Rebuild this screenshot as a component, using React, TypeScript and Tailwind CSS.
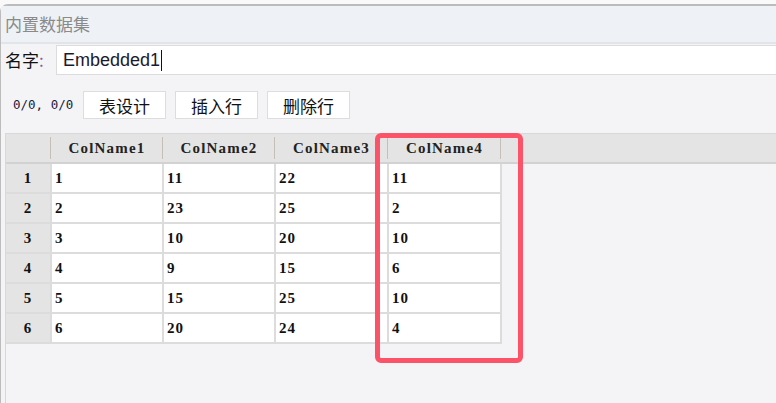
import React from 'react';

const cols = ['ColName1', 'ColName2', 'ColName3', 'ColName4'];
const widths = ['w-[112px]', 'w-[112px]', 'w-[113px]', 'w-[113px]'];

const rows = [
  ['1', '11', '22', '11'],
  ['2', '23', '25', '2'],
  ['3', '10', '20', '10'],
  ['4', '9', '15', '6'],
  ['5', '15', '25', '10'],
  ['6', '20', '24', '4'],
];

const cjk = "font-['Noto_Sans_CJK_SC','Noto_Sans',sans-serif]";
const serif = "font-['Liberation_Serif',serif]";

const ToolButton = ({ label }: { label: string }) => (
  <button
    className={`h-[28px] w-[83px] bg-white border border-[#dddddd] text-[17px] leading-none text-[#111] ${cjk}`}
  >
    {label}
  </button>
);

export default function App() {
  return (
    <div className="w-[776px] h-[403px] overflow-hidden bg-[#f9f9f9] pt-[4px]">
      <div className="relative h-full flex flex-col rounded-tl-[8px] border-t-2 border-l border-[#bcbcbc] bg-[#f4f4f6]">
        {/* title bar */}
        <div className={`h-[38px] shrink-0 flex items-center px-[4px] bg-[#eef2f6] border-b-2 border-[#e1e4e8] text-[17px] text-[#8a8a8a] ${cjk}`}>
          内置数据集
        </div>

        {/* name row */}
        <div className="h-[32px] shrink-0 flex items-center">
          <span className={`pl-[4px] w-[55px] text-[17px] text-[#111] ${cjk}`}>
            名字<span className="text-[#8a5aa8]">:</span>
          </span>
          <div className="flex-1 h-[30px] bg-white border border-[#dcdcdc] border-r-0 flex items-center pl-[6px]">
            <span className="font-['Liberation_Sans',sans-serif] text-[18px] text-[#1a1a2e]">Embedded1</span>
            <span className="w-px h-[21px] bg-[#111] ml-[1px]" />
          </div>
        </div>

        {/* toolbar */}
        <div className="h-[44px] shrink-0 flex items-center pt-[14px] pl-[12px]">
          <span className="w-[70px] font-['DejaVu_Sans_Mono',monospace] text-[12.5px] text-[#1a1a40]">0/0, 0/0</span>
          <div className="flex gap-[9px]">
            <ToolButton label="表设计" />
            <ToolButton label="插入行" />
            <ToolButton label="删除行" />
          </div>
        </div>

        {/* grid */}
        <div className="flex-1 mt-[13px] ml-[4px] border-t border-l border-[#d8d8d8] bg-[#f4f4f6] flex flex-col">
          <div className={`h-[30px] shrink-0 flex bg-[#e4e4e4] border-b-2 border-[#d2d2d2] text-[15px] font-bold tracking-[1.2px] text-[#222] ${serif}`}>
            <div className="w-[46px] flex items-center justify-end">
              <div className="w-px h-[22px] bg-[#c6bfb8] mr-[1px]" />
            </div>
            {cols.map((c, i) => (
              <div key={c} className={`${widths[i]} flex items-center`}>
                <span className="flex-1 text-center">{c}</span>
                <div className="w-px h-[22px] bg-[#c6bfb8] mr-[1px]" />
              </div>
            ))}
          </div>

          {rows.map((r, ri) => (
            <div key={ri} className={`flex h-[30px] shrink-0 text-[15px] font-bold tracking-[1px] text-[#111] ${serif}`}>
              <div className="w-[46px] bg-[#e4e4e4] border-r-2 border-b-2 border-[#dcdcdc] flex items-center justify-center">
                {ri + 1}
              </div>
              {r.map((v, ci) => (
                <div key={ci} className={`${widths[ci]} bg-white border-r-2 border-b-2 border-[#dcdcdc] flex items-center pl-[3px]`}>
                  {v}
                </div>
              ))}
            </div>
          ))}
        </div>

        {/* highlight annotation */}
        <div className="absolute left-[374px] top-[127px] w-[148px] h-[230px] border-[5px] border-[#fb5468] rounded-[6px] pointer-events-none" />
      </div>
    </div>
  );
}
